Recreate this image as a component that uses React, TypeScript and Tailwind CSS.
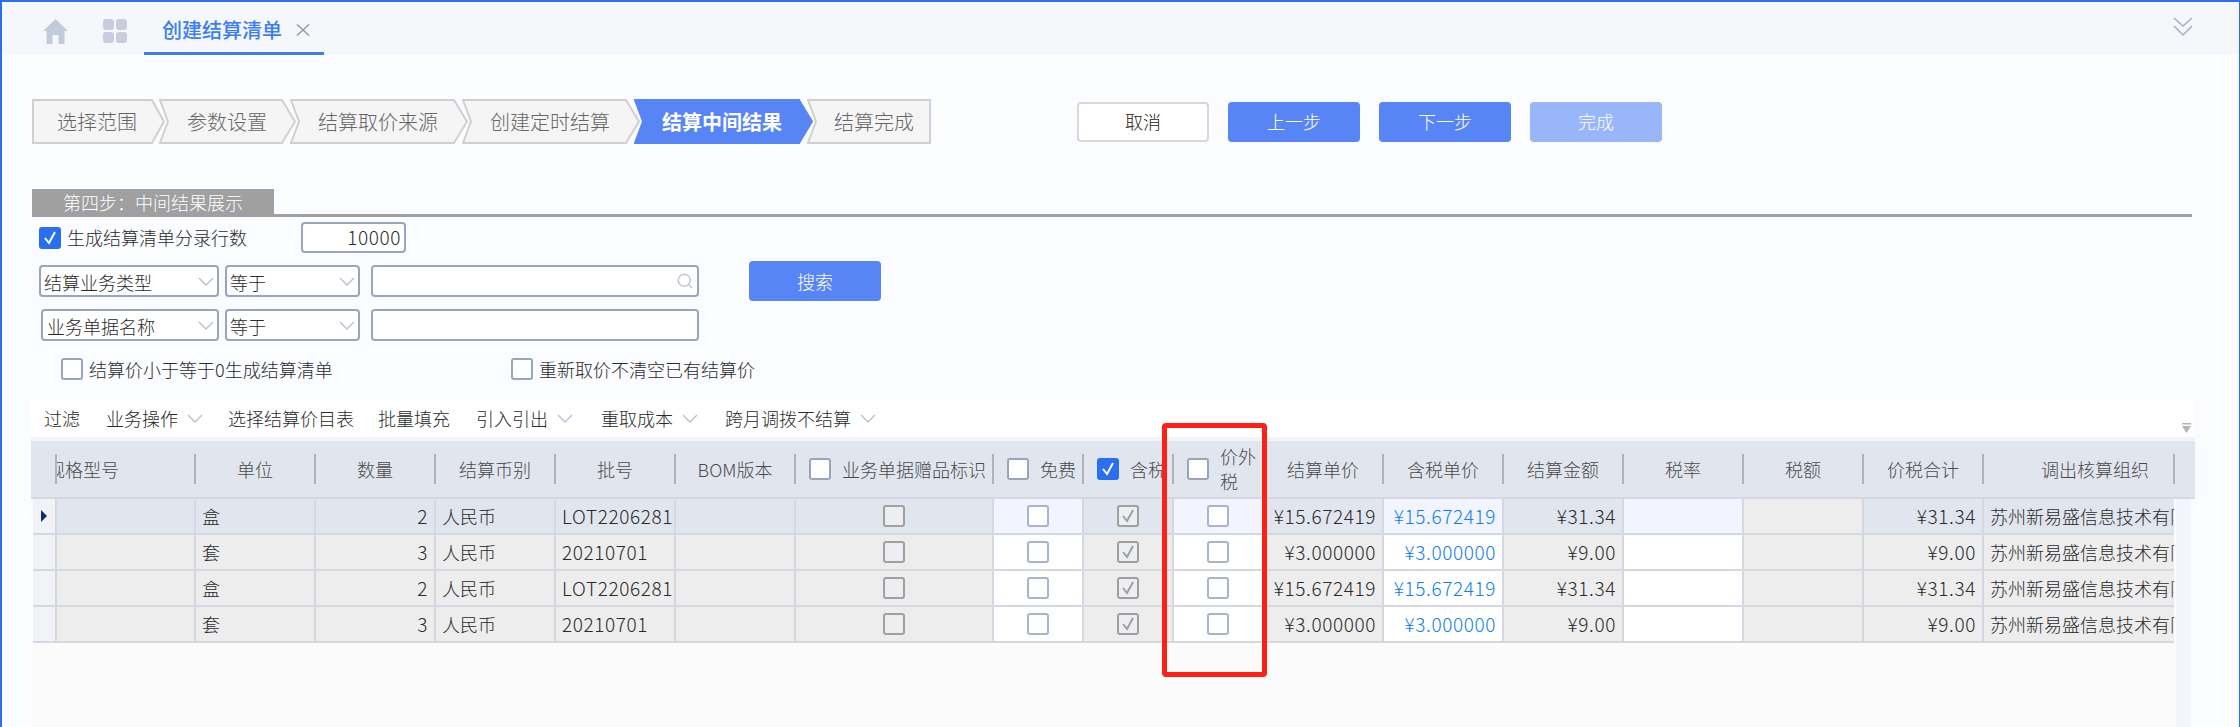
import React from 'react';
import { Search } from 'lucide-react';

const steps = [
  { label: '选择范围', width: 'w-[133px]', w: 133, pad: 'pl-[25px]', first: true },
  { label: '参数设置', width: 'w-[137px]', w: 137, pad: 'pl-[28px]' },
  { label: '结算取价来源', width: 'w-[178px]', w: 178, pad: 'pl-[28px]' },
  { label: '创建定时结算', width: 'w-[178px]', w: 178, pad: 'pl-[28px]' },
  { label: '结算中间结果', width: 'w-[179px]', w: 179, pad: 'pl-[28px]', active: true },
  { label: '结算完成', width: 'w-[124px]', w: 124, pad: 'pl-[27px]', last: true },
];

const Chevron = ({ className = '' }: { className?: string }) => (
  <svg viewBox="0 0 16 9" className={`w-[16px] h-[9px] shrink-0 ${className}`} fill="none" stroke="#b6bfd2" strokeWidth="1.4">
    <polyline points="1,1 8,8 15,1" />
  </svg>
);

const Step = ({ s }: { s: (typeof steps)[number] }) => {
  const w = s.w;
  const points = s.first
    ? `1,1 ${w - 13},1 ${w - 1},22.5 ${w - 13},44 1,44`
    : s.last
      ? `1,1 ${w - 1},1 ${w - 1},44 1,44 9,22.5`
      : `1,1 ${w - 14},1 ${w - 1},22.5 ${w - 14},44 1,44 9,22.5`;
  return (
    <div className={`relative h-[45px] shrink-0 flex items-center ${s.width} ${s.pad} ${s.first ? '' : '-ml-[6px]'}`}>
      <svg width={w} height={45} className="absolute left-0 top-0">
        <polygon
          points={points}
          fill={s.active ? '#5885f5' : '#f5f5f5'}
          stroke={s.active ? '#5885f5' : '#d0d0d0'}
          strokeWidth="2"
        />
      </svg>
      <span className={`relative text-[20px] whitespace-nowrap ${s.active ? 'text-white font-bold' : 'text-[#666] font-light'}`}>
        {s.label}
      </span>
    </div>
  );
};

type BoxKind = 'head' | 'headOn' | 'edit' | 'ro' | 'roOn';

const Box = ({ kind }: { kind: BoxKind }) => {
  const cls = {
    head: 'bg-white border-[#9aa5bd]',
    headOn: 'bg-[#2a6ff0] border-[#2a6ff0]',
    edit: 'bg-white border-[#aab4cc]',
    ro: 'bg-[#eceef2] border-[#a0a0a0]',
    roOn: 'bg-[#eceef2] border-[#a0a0a0]',
  }[kind];
  return (
    <span className={`w-[22px] h-[22px] shrink-0 rounded-[3px] border-2 flex items-center justify-center ${cls}`}>
      {(kind === 'headOn' || kind === 'roOn') && (
        <svg viewBox="0 0 16 16" className="w-[16px] h-[16px]" fill="none" stroke={kind === 'headOn' ? '#fff' : '#a0a0a0'} strokeWidth="2">
          <polyline points="3,8 7,13 13,2" />
        </svg>
      )}
    </span>
  );
};

type Col = {
  width: string;
  label?: string;
  box?: BoxKind;
  wrap?: boolean;
  cell?: 'ro' | 'edit' | 'plain';
  align?: 'left' | 'right' | 'check';
  key?: string;
  color?: string;
  numeric?: boolean;
};

const cols: Col[] = [
  { width: 'w-[139px]', label: '规格型号', cell: 'ro' },
  { width: 'w-[120px]', label: '单位', cell: 'ro', align: 'left', key: 'unit' },
  { width: 'w-[120px]', label: '数量', cell: 'ro', align: 'right', key: 'qty', numeric: true },
  { width: 'w-[120px]', label: '结算币别', cell: 'ro', align: 'left', key: 'cur' },
  { width: 'w-[120px]', label: '批号', cell: 'ro', align: 'left', key: 'lot', numeric: true },
  { width: 'w-[120px]', label: 'BOM版本', cell: 'ro' },
  { width: 'w-[198px]', label: '业务单据赠品标识', box: 'head', cell: 'ro', align: 'check', key: 'gift' },
  { width: 'w-[90px]', label: '免费', box: 'head', cell: 'edit', align: 'check', key: 'free' },
  { width: 'w-[90px]', label: '含税', box: 'headOn', cell: 'ro', align: 'check', key: 'tax' },
  { width: 'w-[90px]', label: '价外税', box: 'head', wrap: true, cell: 'edit', align: 'check', key: 'out' },
  { width: 'w-[120px]', label: '结算单价', cell: 'ro', align: 'right', key: 'price', numeric: true },
  { width: 'w-[120px]', label: '含税单价', cell: 'edit', align: 'right', key: 'price', color: 'text-[#0f7ff0]', numeric: true },
  { width: 'w-[120px]', label: '结算金额', cell: 'ro', align: 'right', key: 'amount', numeric: true },
  { width: 'w-[120px]', label: '税率', cell: 'edit' },
  { width: 'w-[120px]', label: '税额', cell: 'plain' },
  { width: 'w-[120px]', label: '价税合计', cell: 'ro', align: 'right', key: 'amount', numeric: true },
];

const rows: Record<string, string>[] = [
  { unit: '盒', qty: '2', cur: '人民币', lot: 'LOT2206281', price: '¥15.672419', amount: '¥31.34' },
  { unit: '套', qty: '3', cur: '人民币', lot: '20210701', price: '¥3.000000', amount: '¥9.00' },
  { unit: '盒', qty: '2', cur: '人民币', lot: 'LOT2206281', price: '¥15.672419', amount: '¥31.34' },
  { unit: '套', qty: '3', cur: '人民币', lot: '20210701', price: '¥3.000000', amount: '¥9.00' },
];

const toolbar = [
  { label: '过滤', gap: 'ml-[13px]' },
  { label: '业务操作', gap: 'ml-[26px]', menu: true },
  { label: '选择结算价目表', gap: 'ml-[25px]' },
  { label: '批量填充', gap: 'ml-[24px]' },
  { label: '引入引出', gap: 'ml-[26px]', menu: true },
  { label: '重取成本', gap: 'ml-[28px]', menu: true },
  { label: '跨月调拨不结算', gap: 'ml-[27px]', menu: true },
];

const Field = ({ className, children }: { className: string; children?: React.ReactNode }) => (
  <div className={`h-[32px] shrink-0 bg-white border-2 border-[#9aa5bd] rounded-[4px] flex items-center text-[18px] text-[#2a2a2a] font-light ${className}`}>
    {children}
  </div>
);

const Select = ({ className, label }: { className: string; label: string }) => (
  <Field className={`pl-[3px] pr-[3px] justify-between ${className}`}>
    <span className="whitespace-nowrap pt-[2px]">{label}</span>
    <Chevron />
  </Field>
);

const HeaderCell = ({ col }: { col: Col }) => (
  <div className={`h-full shrink-0 flex items-center ${col.width}`}>
    <div className={`flex-1 min-w-0 flex items-center ${col.box ? 'pl-[13px] gap-[11px]' : 'justify-center'}`}>
      {col.box && <Box kind={col.box} />}
      <span className={col.wrap ? 'w-[38px] leading-[25px]' : 'whitespace-nowrap'}>{col.label}</span>
    </div>
    <span className="w-[2px] h-[30px] shrink-0 bg-[#b0b3bb]" />
  </div>
);

const BodyCell = ({ col, row, selected }: { col: Col; row: Record<string, string>; selected: boolean }) => {
  let bg = selected ? 'bg-[#e1e5ee]' : 'bg-[#ededed]';
  if (col.cell === 'edit') bg = selected ? 'bg-[#f2f5ff]' : 'bg-white';
  if (col.cell === 'plain') bg = 'bg-[#ededed]';

  let content: React.ReactNode = null;
  if (col.align === 'check') {
    const kind: BoxKind = col.key === 'tax' ? 'roOn' : col.key === 'gift' ? 'ro' : 'edit';
    content = <Box kind={kind} />;
  } else if (col.key) {
    content = row[col.key];
  }

  const justify = col.align === 'right' ? 'justify-end pr-[6px]' : col.align === 'left' ? 'pl-[6px]' : 'justify-center';
  return (
    <div className={`h-full shrink-0 border-r-2 border-[#d5d8e0] flex items-center ${col.numeric ? 'text-[19px] tracking-[0.6px]' : ''} ${col.width} ${bg} ${justify} ${col.color ?? ''}`}>
      {content}
    </div>
  );
};

const App: React.FC = () => {
  return (
    <div className="w-[2240px] h-[727px] overflow-hidden relative flex flex-col bg-[#fbfcff] border-t-2 border-l-2 border-r border-[#2a6ff0] text-[#2a2a2a] font-['Noto_Sans_CJK_SC','Liberation_Sans',sans-serif] font-light">
      {/* tab bar */}
      <div className="h-[53px] shrink-0 bg-[#f6f7fb] flex items-stretch pl-[41px] pr-[46px]">
        <svg viewBox="0 0 25 25" className="w-[25px] h-[25px] mt-[17px]" fill="#c5cadb">
          <path d="M12.5 0 L25 12 L21.5 12 L21.5 25 L15.5 25 L15.5 16 L9.5 16 L9.5 25 L3.5 25 L3.5 12 L0 12 Z" />
        </svg>
        <svg viewBox="0 0 24 24" className="w-[24px] h-[24px] mt-[17px] ml-[35px]" fill="#c8ccdc">
          <rect x="0" y="0" width="11" height="11" rx="3" />
          <rect x="13" y="0" width="11" height="11" rx="3" />
          <rect x="0" y="13" width="11" height="11" rx="3" />
          <rect x="13" y="13" width="11" height="11" rx="3" />
        </svg>
        <div className="ml-[17px] w-[180px] border-b-[3px] border-[#3a7df5] flex items-center pl-[18px] pt-[5px]">
          <span className="text-[20px] font-medium text-[#3a7df5] whitespace-nowrap">创建结算清单</span>
          <svg viewBox="0 0 14 12" className="w-[14px] h-[12px] ml-[14px]" fill="none" stroke="#8f98b0" strokeWidth="1.4">
            <line x1="1" y1="0.5" x2="13" y2="11.5" />
            <line x1="13" y1="0.5" x2="1" y2="11.5" />
          </svg>
        </div>
        <svg viewBox="0 0 20 19" className="w-[20px] h-[19px] mt-[15px] ml-auto" fill="none" stroke="#a5aec5" strokeWidth="1.5">
          <polyline points="1,1 10,9 19,1" />
          <polyline points="1,9 10,18 19,9" />
        </svg>
      </div>

      {/* steps and actions */}
      <div className="pt-[44px] pl-[30px] flex items-center shrink-0">
        <div className="flex">
          {steps.map((s) => (
            <Step key={s.label} s={s} />
          ))}
        </div>
        <div className="ml-[146px] flex gap-[19px] text-[18px]">
          <button className="w-[132px] h-[40px] bg-white border-2 border-[#d8d8d8] rounded-[4px] text-[#222]">取消</button>
          <button className="w-[132px] h-[40px] bg-[#5885f5] rounded-[4px] text-white">上一步</button>
          <button className="w-[132px] h-[40px] bg-[#5885f5] rounded-[4px] text-white">下一步</button>
          <button className="w-[132px] h-[40px] bg-[#9ab6fa] rounded-[4px] text-white">完成</button>
        </div>
      </div>

      {/* section title */}
      <div className="mt-[45px] ml-[30px] w-[2160px] border-b-[3px] border-[#a0a0a0] shrink-0">
        <div className="w-[242px] h-[25px] bg-[#a0a0a0] text-white text-[18px] pl-[31px] pt-[1px] flex items-center whitespace-nowrap">
          第四步：中间结果展示
        </div>
      </div>

      {/* filter form */}
      <div className="ml-[37px] shrink-0 text-[18px]">
        <div className="mt-[5px] h-[31px] flex items-center">
          <Box kind="headOn" />
          <span className="ml-[6px] w-[234px] whitespace-nowrap">生成结算清单分录行数</span>
          <div className="w-[105px] h-[31px] bg-white border-2 border-[#9aa5bd] rounded-[4px] flex items-center justify-end pr-[3px] text-[19px] tracking-[0.6px]">10000</div>
        </div>
        <div className="mt-[12px] h-[32px] flex items-center">
          <Select className="w-[180px]" label="结算业务类型" />
          <Select className="w-[135px] ml-[6px]" label="等于" />
          <Field className="w-[328px] ml-[11px] justify-end pr-[3px]">
            <Search className="w-[18px] h-[18px] text-[#c3c9d6]" strokeWidth={2} />
          </Field>
          <button className="ml-[50px] w-[132px] h-[40px] shrink-0 bg-[#5885f5] rounded-[4px] text-white">搜索</button>
        </div>
        <div className="mt-[12px] h-[32px] flex items-center pl-[2px]">
          <Select className="w-[178px] pl-[4px]" label="业务单据名称" />
          <Select className="w-[135px] ml-[6px]" label="等于" />
          <Field className="w-[328px] ml-[11px]" />
        </div>
        <div className="mt-[17px] h-[22px] flex items-center pl-[22px]">
          <Box kind="head" />
          <span className="ml-[6px] w-[422px] whitespace-nowrap">结算价小于等于0生成结算清单</span>
          <Box kind="head" />
          <span className="ml-[6px] whitespace-nowrap">重新取价不清空已有结算价</span>
        </div>
      </div>

      {/* grid */}
      <div className="mt-[19px] ml-[29px] w-[2164px] flex-1 min-h-0 flex flex-col">
        <div className="relative h-[38px] shrink-0 bg-white flex items-center text-[18px]">
          {toolbar.map((t) => (
            <div key={t.label} className={`flex items-center gap-[9px] whitespace-nowrap ${t.gap}`}>
              {t.label}
              {t.menu && <Chevron />}
            </div>
          ))}
          <svg viewBox="0 0 9 10" className="absolute right-[4px] top-[24px] w-[9px] h-[10px]" fill="#b5b5b5">
            <rect x="0" y="0" width="9" height="1.5" />
            <polygon points="0,3 9,3 4.5,10" />
          </svg>
        </div>
        <div className="h-[4px] shrink-0 bg-[#f2f4f8]" />
        <div className="h-[58px] shrink-0 bg-[#e1e5ee] border-b-2 border-[#d5d8e0] flex text-[18px] text-[#4a4a4a]">
          <div className="w-[26px] h-full shrink-0 flex items-center justify-end">
            <span className="w-[2px] h-[30px] bg-[#b0b3bb]" />
          </div>
          <div className="w-[139px] h-full shrink-0 flex items-center">
            <div className="flex-1 min-w-0 overflow-hidden flex justify-end pr-[75px] whitespace-nowrap">规格型号</div>
            <span className="w-[2px] h-[30px] shrink-0 bg-[#b0b3bb]" />
          </div>
          {cols.slice(1).map((c) => (
            <HeaderCell key={c.label} col={c} />
          ))}
          <div className="w-[191px] h-full shrink-0 flex items-center">
            <div className="flex-1 min-w-0 pl-[57px] whitespace-nowrap">调出核算组织</div>
            <span className="w-[2px] h-[30px] shrink-0 bg-[#b0b3bb]" />
          </div>
        </div>
        <div className="flex-1 min-h-0 flex">
          <div className="ml-[2px] w-[2141px] bg-[#fbfbfb] text-[18px]">
            {rows.map((row, i) => (
              <div key={i} className="h-[36px] flex border-b-2 border-[#d5d8e0] overflow-hidden">
                <div className="w-[24px] h-full shrink-0 bg-[#f2f3f7] border-r-2 border-[#d5d8e0] flex items-center pl-[8px]">
                  {i === 0 && <span className="w-0 h-0 border-y-[6px] border-y-transparent border-l-[6px] border-l-[#0f2f6b]" />}
                </div>
                {cols.map((c) => (
                  <BodyCell key={c.label} col={c} row={row} selected={i === 0} />
                ))}
                <div className={`w-[191px] h-full shrink-0 overflow-hidden whitespace-nowrap flex items-center pl-[6px] ${i === 0 ? 'bg-[#e1e5ee]' : 'bg-[#ededed]'}`}>
                  苏州新易盛信息技术有限公司
                </div>
              </div>
            ))}
          </div>
          <div className="ml-[2px] w-[15px] bg-[#f2f5fb]" />
        </div>
      </div>

      {/* red annotation box */}
      <div className="absolute left-[1160px] top-[421px] w-[105px] h-[254px] border-[5px] border-[#ff2015] rounded-[4px]" />
    </div>
  );
};

export default App;
